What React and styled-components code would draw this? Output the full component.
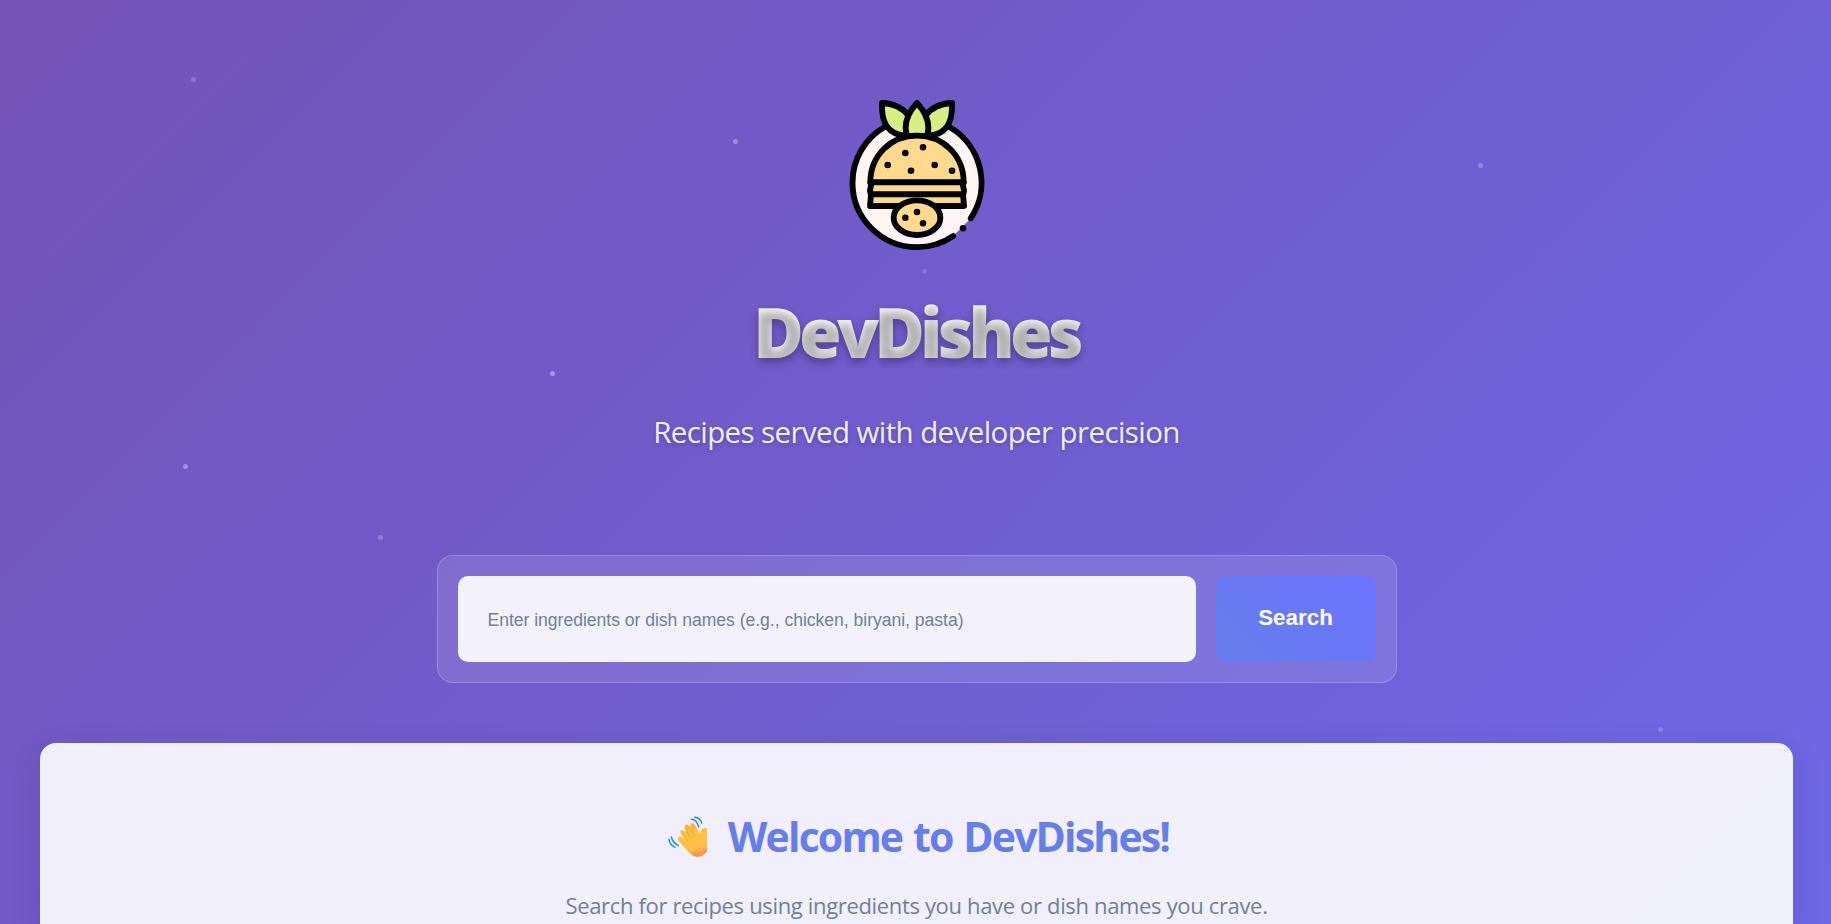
import React from 'react';
import styled, { createGlobalStyle } from 'styled-components';

const GlobalStyle = createGlobalStyle`
  *, *::before, *::after { box-sizing: border-box; }
  html, body { margin: 0; padding: 0; overflow: hidden; }
  body { font-family: 'Open Sans', 'Noto Sans', sans-serif; background: #6e68e6; }
`;

const Page = styled.div`
  position: relative;
  width: 1834px;
  height: 924px;
  overflow: hidden;
  padding: 99px 41px 0 40px;
  background: linear-gradient(135deg, #7554b6 0%, #7159c5 30%, #6e68e6 100%);
`;

const Particle = styled.span`
  position: absolute;
  left: ${(p) => p.$x - 2.5}px;
  top: ${(p) => p.$y - 2.5}px;
  width: 5px;
  height: 5px;
  border-radius: 50%;
  background: rgba(255, 255, 255, ${(p) => p.$alpha});
`;

const Hero = styled.header`
  display: flex;
  flex-direction: column;
  align-items: center;
`;

const Logo = styled.svg`
  display: block;
  width: 150px;
  height: 152px;
`;

const Title = styled.h1`
  margin: 38px 0 0;
  padding: 0 3px 0 2px;
  font-size: 69px;
  line-height: 84px;
  font-weight: 800;
  letter-spacing: -4.8px;
  white-space: nowrap;
  background: linear-gradient(45deg, #fff, #f4f4f4);
  background-clip: text;
  -webkit-background-clip: text;
  -webkit-text-fill-color: transparent;
  text-shadow: 0 4px 8px rgba(0, 0, 0, 0.3);
`;

const Tagline = styled.p`
  margin: 36px 0 0;
  font-size: 29.5px;
  line-height: 45px;
  letter-spacing: -0.6px;
  white-space: nowrap;
  color: rgba(255, 255, 255, 0.92);
  text-shadow: 0 2px 4px rgba(0, 0, 0, 0.2);
`;

const SearchBar = styled.form`
  display: flex;
  gap: 20px;
  width: 960px;
  height: 128px;
  margin: 101px 0 0;
  padding: 20px;
  border: 1px solid rgba(255, 255, 255, 0.2);
  border-radius: 16px;
  background: rgba(255, 255, 255, 0.115);
`;

const SearchInput = styled.input`
  flex: 1;
  min-width: 0;
  padding: 2px 30px 0;
  border: 0;
  border-radius: 10px;
  outline: 0;
  background: rgba(255, 255, 255, 0.9);
  font: 17.6px 'Liberation Sans', Arial, sans-serif;
  letter-spacing: -0.035px;
  &::placeholder { color: #718096; opacity: 1; }
`;

const SearchButton = styled.button`
  width: 160px;
  padding: 0 0 2px;
  border: 0;
  border-radius: 10px;
  background: linear-gradient(45deg, #667eea, #6b73ff);
  color: #fff;
  font: bold 22.4px 'Liberation Sans', Arial, sans-serif;
`;

const WelcomeCard = styled.main`
  display: flex;
  flex-direction: column;
  align-items: center;
  height: 400px;
  margin-top: 60px;
  padding-top: 64px;
  border-radius: 16px;
  background: rgba(255, 255, 255, 0.9);
  box-shadow: 0 8px 32px rgba(0, 0, 0, 0.1);
`;

const Heading = styled.h2`
  display: flex;
  align-items: flex-start;
  gap: 21px;
  margin: 0;
  padding: 1px 0 0 4px;
  font-size: 41px;
  line-height: 56px;
  font-weight: 700;
  letter-spacing: -1.85px;
  word-spacing: 2px;
  white-space: nowrap;
  color: #667eea;
`;

const Wave = styled.svg`
  width: 39px;
  height: 42px;
  margin-top: 8px;
`;

const Description = styled.p`
  margin: 25px 0 0;
  font-size: 22px;
  line-height: 33px;
  letter-spacing: -0.34px;
  white-space: nowrap;
  color: #718096;
`;

const PARTICLES = [
  [193.5, 79, 0.2], [735.5, 141.5, 0.32], [1480, 165, 0.25], [924, 271.5, 0.15],
  [552.5, 373.5, 0.36], [185.5, 466.5, 0.33], [380, 537.5, 0.22], [1660, 729.5, 0.18],
];

const SEEDS = [
  [226, 219], [279, 202], [173, 255], [243, 272], [314, 255], [366, 272],
];
const PATTY_SEEDS = [[226, 413], [261, 396], [279, 430]];

function BurgerLogo() {
  return (
    <Logo viewBox="36 57 450 456" aria-label="DevDishes logo">
      <path d="M422.2 415.1 A193.5 193.5 0 0 0 261 114.5 A193.5 193.5 0 0 0 261 501.5 A193.5 193.5 0 0 0 369.2 468.4 Z" fill="#fff5f3" />
      <path d="M357.2 140.1 A193.5 193.5 0 0 1 422.2 415.1 M369.2 468.4 A193.5 193.5 0 0 1 261 501.5 A193.5 193.5 0 0 1 67.5 308 A193.5 193.5 0 0 1 164.8 140.1"
        fill="none" stroke="#000" strokeWidth="17.5" strokeLinecap="round" />
      <g stroke="#000" strokeWidth="17.5" strokeLinejoin="round" strokeLinecap="round">
        <path d="M156 69 C154 119 166 162 226 167 L236 107 C218 84 190 70 156 69Z" fill="#d8ed82" />
        <path d="M366 69 C368 119 356 162 296 167 L286 107 C304 84 332 70 366 69Z" fill="#d8ed82" />
        <path d="M261 69 C235 97 219 130 231 168 H291 C303 130 287 97 261 69Z" fill="#d8ed82" />
        <path d="M121 307 C121 225 184 167 261 167 S401 225 401 307Z" fill="#ffd98e" />
        <path d="M121 307 H401 L399 317 L402 332 L400 343 H122 L120 332 L123 317Z" fill="#ffd98e" />
        <path d="M123 343 H399 L402 378 H120Z" fill="#ffd98e" />
        <ellipse cx="261" cy="413" rx="70" ry="52" fill="#ffd98e" />
      </g>
      {SEEDS.concat(PATTY_SEEDS).map(([x, y]) => (
        <circle key={`${x}-${y}`} cx={x} cy={y} r="9.8" />
      ))}
      <circle cx="399" cy="445" r="9.8" />
    </Logo>
  );
}

function WavingHand() {
  return (
    <Wave viewBox="24 33 117 126" aria-label="Waving hand">
      <defs>
        <linearGradient id="skin" x1="0" y1="0" x2="0.25" y2="1">
          <stop offset="0" stopColor="#f5a92f" />
          <stop offset="0.45" stopColor="#ffc445" />
          <stop offset="0.85" stopColor="#ffbd45" />
          <stop offset="1" stopColor="#f39a55" />
        </linearGradient>
      </defs>
      <path d="M56 96 C62 92 67 97 72 101 L62 85 C58 77 67 73 72 79 L78 84 L74 68 C73 58 82 55 87 62 L91 68 C88 57 99 50 104 59 L121 88 C120 78 125 70 134 69 Q140 68 144 73 V136 C134 153 118 158 107 155 C95 152 86 143 77 132 L56 108 C52 103 53 99 56 96Z" fill="url(#skin)" />
      <path d="M70 92 L84 109 M79 80 L94 99 M92 71 L105 92" fill="none" stroke="#df8528" strokeWidth="3" strokeLinecap="round" opacity="0.5" />
      <path d="M104 37 Q120 38 125 54 M94 43 Q110 43 116 66 M34 96 Q38 113 55 122 M27 103 Q29 119 45 127" fill="none" stroke="#2d8ece" strokeWidth="4.5" strokeLinecap="round" />
    </Wave>
  );
}

export default function App() {
  return (
    <>
      <GlobalStyle />
      <Page>
        {PARTICLES.map(([x, y, a]) => <Particle key={x} $x={x} $y={y} $alpha={a} />)}
        <Hero>
          <BurgerLogo />
          <Title>DevDishes</Title>
          <Tagline>Recipes served with developer precision</Tagline>
          <SearchBar onSubmit={(e) => e.preventDefault()}>
            <SearchInput placeholder="Enter ingredients or dish names (e.g., chicken, biryani, pasta)" />
            <SearchButton type="submit">Search</SearchButton>
          </SearchBar>
        </Hero>
        <WelcomeCard>
          <Heading><WavingHand /><span>Welcome to DevDishes!</span></Heading>
          <Description>Search for recipes using ingredients you have or dish names you crave.</Description>
        </WelcomeCard>
      </Page>
    </>
  );
}
